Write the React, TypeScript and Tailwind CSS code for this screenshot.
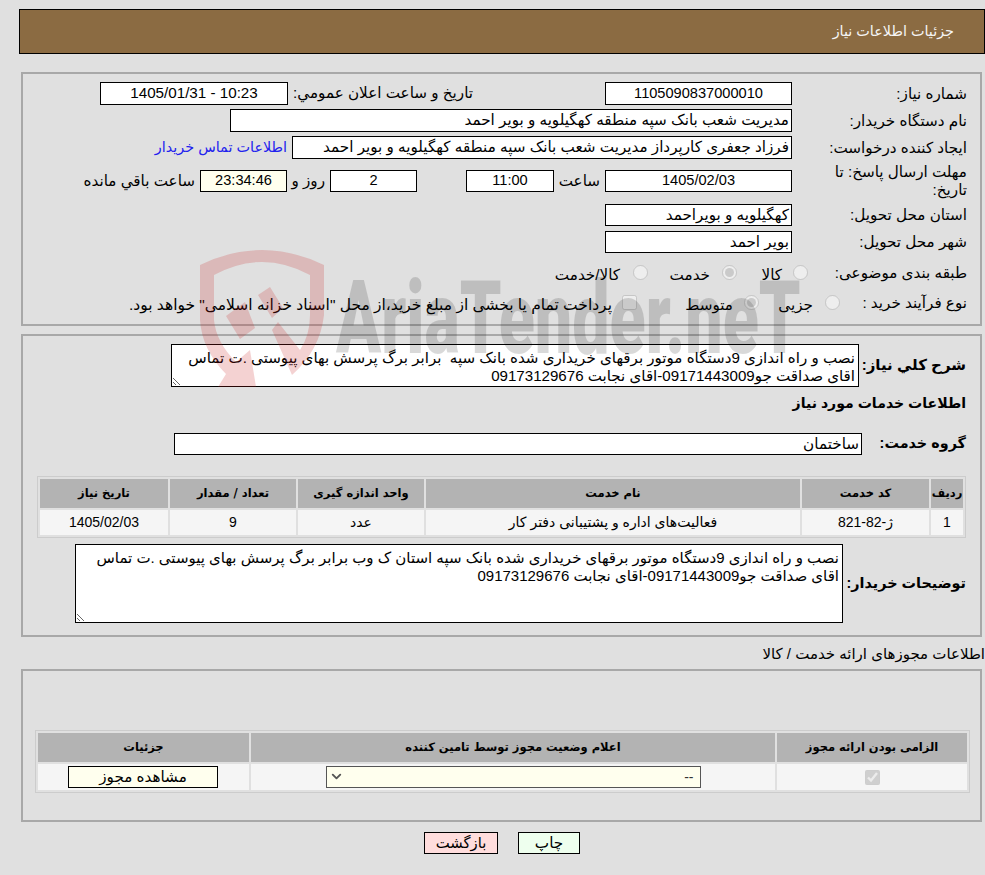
import React from "react";
import { ChevronDown } from "lucide-react";

const FONT = "font-['Liberation_Sans','DejaVu_Sans',sans-serif]";

const Box = ({ w, h, children, center, yellow }: { w: string; h?: string; children?: React.ReactNode; center?: boolean; yellow?: boolean }) => (
  <div
    className={`${w} ${h ?? "h-[22px]"} shrink-0 border border-black px-[2px] whitespace-nowrap overflow-hidden flex items-center ${center ? "justify-center text-[14.6px]" : "justify-start"} ${yellow ? "bg-[#ffffee]" : "bg-white"}`}
  >
    {children}
  </div>
);

const Label = ({ children }: { children: React.ReactNode }) => (
  <div className="w-[175px] shrink-0 pl-[9px] leading-[18px]">{children}</div>
);

const Radio = ({ checked, className }: { checked?: boolean; className?: string }) => (
  <input type="radio" disabled checked={checked} readOnly className={`w-[15px] h-[15px] m-0 mb-[6px] shrink-0 ${className ?? ""}`} />
);

const Watermark = () => (
  <div className="absolute left-[200px] top-[250px] w-[610px] h-[137px] pointer-events-none">
    <svg className="absolute left-0 top-0" width="126" height="137" viewBox="0 0 126 137">
      <path
        d="M0 15 Q62 -15 124 15 L124 65 Q120 100 92 125 L72 80 L78 72 L100 100 Q110 85 110 65 L110 25 Q62 -1 14 25 L14 70 Q16 92 36 112 L50 100 L56 137 L18 137 L26 124 Q2 100 0 70 Z"
        fill="#c81e1e"
        fillOpacity="0.2"
      />
      <path d="M26 66 L45 52 L55 78 L40 89 Z" fill="#c81e1e" fillOpacity="0.2" />
      <path d="M58 45 L70 37 L83 58 L72 68 Z" fill="#c81e1e" fillOpacity="0.2" />
    </svg>
    <div
      dir="ltr"
      className="absolute left-[136px] top-[17px] font-['Roboto',sans-serif] font-black text-[102px] leading-none text-black/15 whitespace-nowrap origin-left scale-x-[0.65]"
    >
      AriaTender.neT
    </div>
  </div>
);

const thClass = "bg-[#b3b3b3] font-bold text-[11.5px] h-[29px] text-center font-['DejaVu_Sans',sans-serif]";
const tdClass = "bg-[#f5f5f5] text-center text-[14px]";
const panelClass = "ml-[21px] mr-[3px] border-2 border-[#a8a8a8]";
const sectionLabel = "shrink-0 font-bold text-[14.4px] whitespace-nowrap";

export default function App() {
  return (
    <div dir="rtl" className={`relative w-[985px] h-[875px] bg-[#e0e0e0] text-[15.2px] text-black overflow-hidden pt-[9px] ${FONT}`}>
      <div className="ml-[19px] h-[45px] border border-black bg-[#8b6b42] text-[#f5f5f5] text-[14.4px] pr-[30px] leading-[43px]">جزئیات اطلاعات نیاز</div>

      <div className={`${panelClass} mt-[18px] h-[254px] pr-[13px] pt-[8px]`}>
        <div className="flex items-center h-[23px]">
          <Label>شماره نیاز:</Label>
          <Box w="w-[187px]" h="h-[23px]" center>1105090837000010</Box>
          <div className="w-[132px] shrink-0" />
          <div className="w-[185px] shrink-0 whitespace-nowrap">تاریخ و ساعت اعلان عمومي:</div>
          <Box w="w-[188px]" h="h-[23px]" center><span className="text-[15.2px]">10:23 - 1405/01/31</span></Box>
        </div>
        <div className="flex items-center h-[23px] mt-[4px]">
          <Label>نام دستگاه خریدار:</Label>
          <Box w="w-[562px]" h="h-[23px]">مدیریت شعب بانک سپه منطقه کهگیلویه و بویر احمد</Box>
        </div>
        <div className="flex items-center h-[23px] mt-[4px]">
          <Label>ایجاد کننده درخواست:</Label>
          <Box w="w-[500px]" h="h-[23px]">فرزاد جعفری کارپرداز مدیریت شعب بانک سپه منطقه کهگیلویه و بویر احمد</Box>
          <div className="pr-[5px] text-[14.4px] text-[#2222ee] whitespace-nowrap">اطلاعات تماس خریدار</div>
        </div>
        <div className="flex items-center h-[36px] mt-[4px]">
          <Label>مهلت ارسال پاسخ: تا تاریخ:</Label>
          <Box w="w-[187px]" center>1405/02/03</Box>
          <div className="w-[51px] shrink-0 pr-[5px]">ساعت</div>
          <Box w="w-[88px]" center>11:00</Box>
          <div className="w-[49px] shrink-0" />
          <Box w="w-[87px]" center>2</Box>
          <div className="w-[43px] shrink-0 pr-[5px] whitespace-nowrap">روز و</div>
          <Box w="w-[87px]" center yellow>23:34:46</Box>
          <div className="pr-[5px] whitespace-nowrap">ساعت باقي مانده</div>
        </div>
        <div className="flex items-center h-[22px] mt-[5px]">
          <Label>استان محل تحویل:</Label>
          <Box w="w-[187px]">کهگیلویه و بویراحمد</Box>
        </div>
        <div className="flex items-center h-[22px] mt-[5px]">
          <Label>شهر محل تحویل:</Label>
          <Box w="w-[187px]">بویر احمد</Box>
        </div>
        <div className="flex items-center h-[24px] mt-[10px]">
          <div className="w-[175px] shrink-0 mb-[4px] pl-[9px]">طبقه بندی موضوعی:</div>
          <Radio className="mr-[-16px]" />
          <span className="w-[56px] pr-[11px]">کالا</span>
          <Radio checked />
          <span className="w-[74px] pr-[12px]">خدمت</span>
          <Radio />
          <span className="pr-[13px] whitespace-nowrap">کالا/خدمت</span>
        </div>
        <div className="flex items-center h-[24px] mt-[6px]">
          <div className="w-[175px] shrink-0 mb-[4px] pl-[9px]">نوع فرآیند خرید :</div>
          <Radio className="mr-[-48px]" />
          <span className="w-[66px] pr-[12px]">جزیی</span>
          <Radio checked />
          <span className="w-[107px] pr-[11px]">متوسط</span>
          <input type="checkbox" disabled className="w-[15px] h-[15px] m-0 mb-[6px] shrink-0" />
          <span className="pr-[10px] text-[15.5px] whitespace-nowrap">پرداخت تمام یا بخشی از مبلغ خرید،از محل "اسناد خزانه اسلامی" خواهد بود.</span>
        </div>
      </div>

      <div className={`${panelClass} mt-[8px] h-[303px] pr-[14px] pl-[14px] pt-[8px]`}>
        <div className="flex items-center h-[43px]">
          <div className={`w-[107px] ${sectionLabel} text-[15px]`}>شرح کلي نیاز:</div>
          <textarea
            readOnly
            className="w-[688px] h-[43px] shrink-0 border border-black bg-white px-[3px] pt-[4px] leading-[18px] text-[15.1px] overflow-hidden"
            defaultValue={"نصب و راه اندازی 9دستگاه موتور برقهای خریداری شده بانک سپه  برابر برگ پرسش بهای پیوستی .ت تماس\nاقای صداقت جو09171443009-اقای نجابت 09173129676"}
          />
        </div>
        <div className="mt-[6px] font-bold text-[14.1px] h-[20px] leading-[20px]">اطلاعات خدمات مورد نیاز</div>
        <div className="flex items-center h-[22px] mt-[20px]">
          <div className={`w-[104px] ${sectionLabel}`}>گروه خدمت:</div>
          <Box w="w-[688px]">ساختمان</Box>
        </div>
        <table className="mt-[21px] w-[929px] border-separate border-spacing-[2px] border border-[#cccccc] table-fixed">
          <thead>
            <tr>
              <th className={`${thClass} w-[32px]`}>ردیف</th>
              <th className={`${thClass} w-[127px]`}>کد خدمت</th>
              <th className={`${thClass} w-[374px]`}>نام خدمت</th>
              <th className={`${thClass} w-[126px]`}>واحد اندازه گیری</th>
              <th className={`${thClass} w-[126px]`}>تعداد / مقدار</th>
              <th className={thClass}>تاریخ نیاز</th>
            </tr>
          </thead>
          <tbody>
            <tr className="h-[25px]">
              <td className={tdClass}>1</td>
              <td className={tdClass}>ژ-82-821</td>
              <td className={tdClass}>فعالیت‌های اداره و پشتیبانی دفتر کار</td>
              <td className={tdClass}>عدد</td>
              <td className={tdClass}>9</td>
              <td className={tdClass}>1405/02/03</td>
            </tr>
          </tbody>
        </table>
        <div className="flex items-center mt-[6px] h-[79px]">
          <div className={`w-[123px] ${sectionLabel}`}>توضیحات خریدار:</div>
          <textarea
            readOnly
            className="w-[768px] h-[79px] shrink-0 border border-black bg-white px-[3px] pt-[4px] leading-[18px] text-[15px] overflow-hidden"
            defaultValue={"نصب و راه اندازی 9دستگاه موتور برقهای خریداری شده بانک سپه استان ک وب برابر برگ پرسش بهای پیوستی .ت تماس\nاقای صداقت جو09171443009-اقای نجابت 09173129676"}
          />
        </div>
      </div>

      <div className="mt-[7px] h-[20px] leading-[20px] text-[15px] whitespace-nowrap">اطلاعات مجوزهای ارائه خدمت / کالا</div>

      <div className={`${panelClass} mt-[5px] h-[153px] pt-[59px] pr-[10px]`}>
        <table className="w-[935px] border-separate border-spacing-[2px] border border-[#cccccc] table-fixed">
          <thead>
            <tr>
              <th className={`${thClass} w-[190px]`}>الزامی بودن ارائه مجوز</th>
              <th className={`${thClass} w-[524px]`}>اعلام وضعیت مجوز توسط تامین کننده</th>
              <th className={thClass}>جزئیات</th>
            </tr>
          </thead>
          <tbody>
            <tr className="h-[26px]">
              <td className={tdClass}>
                <input type="checkbox" disabled defaultChecked className="w-[15px] h-[15px] m-0 align-middle" />
              </td>
              <td className={tdClass}>
                <div className="relative w-[375px] h-[22px] mx-auto">
                  <select disabled className="block appearance-none w-full h-full border border-[#555555] bg-[#ffffee] opacity-100 pr-[6px] text-[14px] text-[#333333]">
                    <option>--</option>
                  </select>
                  <ChevronDown className="absolute left-[3px] top-[3px] text-[#555555]" size={15} strokeWidth={3} />
                </div>
              </td>
              <td className={tdClass}>
                <div className="w-[150px] h-[22px] mr-[31px] border border-black bg-[#ffffee] text-[15.2px] leading-[20px]">مشاهده مجوز</div>
              </td>
            </tr>
          </tbody>
        </table>
      </div>

      <div className="flex justify-center gap-[20px] mt-[10px] pl-[19px]">
        <div className="w-[62px] h-[22px] border border-black bg-[#eeffee] text-center leading-[20px]">چاپ</div>
        <div className="w-[74px] h-[22px] border border-black bg-[#ffdddd] text-center text-[14.8px] leading-[20px]">بازگشت</div>
      </div>

      <Watermark />
    </div>
  );
}
